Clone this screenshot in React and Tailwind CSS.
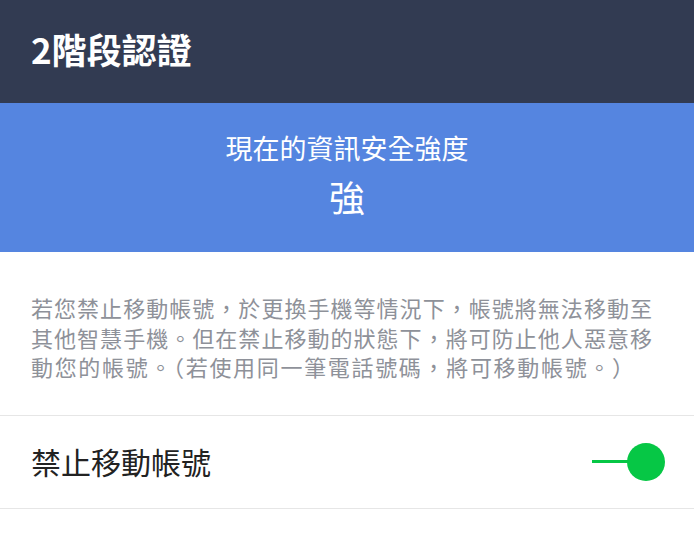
import React from "react";

const font = { fontFamily: '"Noto Sans CJK TC", "Noto Sans", sans-serif' };

const lines = [
  { text: "若您禁止移動帳號，於更換手機等情況下，帳號將無法移動至", w: "w-[621px]" },
  { text: "其他智慧手機。但在禁止移動的狀態下，將可防止他人惡意移", w: "w-[621px]" },
  { text: "動您的帳號。（若使用同一筆電話號碼，將可移動帳號。）", w: "w-[603px]" },
];

const App = () => {
  return (
    <div className="w-[694px] h-[535px] bg-white overflow-hidden" style={font}>
      <header className="h-[103px] bg-[#323b52] flex items-center px-[31px]">
        <h1 className="text-[35px] font-bold text-white leading-none pb-[6px]">2階段認證</h1>
      </header>

      <section className="h-[149px] bg-[#5585e0] flex flex-col items-center justify-center pb-[8px] text-white">
        <p className="text-[27px] leading-none">現在的資訊安全強度</p>
        <p className="text-[36px] leading-none mt-[17px]">強</p>
      </section>

      <div className="pl-[31px] pt-[41px] pb-[33px] border-b border-[#e6e6e6] text-[22px] leading-[29.5px] text-[#8e9199]">
        {lines.map((line) => (
          <p key={line.text} className={`${line.w} whitespace-nowrap text-justify [text-align-last:justify]`}>
            {line.text}
          </p>
        ))}
      </div>

      <div className="h-[93px] flex items-center justify-between pl-[31px] pr-[29px] border-b border-[#e6e6e6]">
        <span className="text-[30px] text-[#222]">禁止移動帳號</span>
        <div className="flex items-center">
          <div className="w-[40px] h-[3px] bg-[#06c745]" />
          <div className="w-[38px] h-[38px] rounded-full bg-[#06c745] -ml-[5px]" />
        </div>
      </div>
    </div>
  );
};

export default App;
